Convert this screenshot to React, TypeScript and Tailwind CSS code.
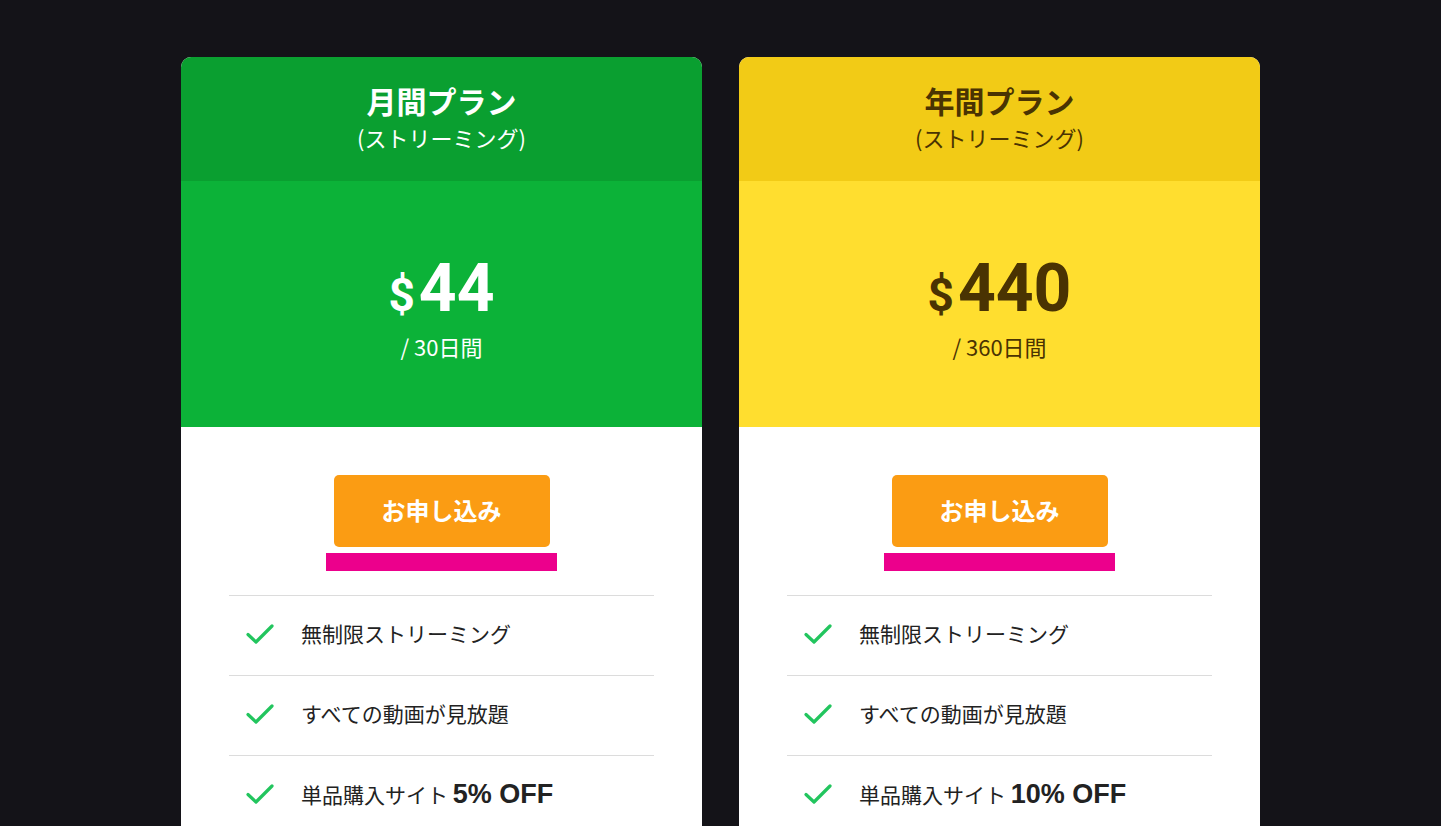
import React from "react";

const jp = '"Noto Sans CJK JP", "Noto Sans", sans-serif';
const num = 'Roboto, "Noto Sans", sans-serif';

function Check() {
  return (
    <svg width="28" height="22" viewBox="0 0 28 22" fill="none">
      <path d="M2 11.5 L10 19 L26 3" stroke="#22c55e" strokeWidth="3.2" strokeLinecap="round" strokeLinejoin="round" />
    </svg>
  );
}

type Plan = {
  title: string;
  price: string;
  period: string;
  off: string;
  headBg: string;
  priceBg: string;
  text: string;
};

function Card({ p }: { p: Plan }) {
  return (
    <div className="w-[521px] rounded-t-[10px] overflow-hidden bg-white" style={{ fontFamily: jp }}>
      <div className={`h-[124px] flex flex-col items-center pt-[23px] ${p.headBg} ${p.text}`}>
        <div className="text-[30px] font-bold leading-[40px]">{p.title}</div>
        <div className="text-[22px] leading-[30px] mt-[2px]">(ストリーミング)</div>
      </div>
      <div className={`h-[246px] flex flex-col items-center pt-[72px] ${p.priceBg} ${p.text}`}>
        <div className="flex items-baseline font-bold" style={{ fontFamily: num }}>
          <span className="text-[46px] mr-[4px]">$</span>
          <span className="text-[66px] leading-[72px]">{p.price}</span>
        </div>
        <div className="text-[22px] mt-[1px] leading-[30px]">{p.period}</div>
      </div>
      <div className="flex flex-col items-center pt-[48px]">
        <button className="w-[216px] h-[72px] rounded-[5px] bg-[#fb9c13] text-white text-[24px] font-bold pb-[2px]">
          お申し込み
        </button>
        <div className="w-[231px] h-[18px] bg-[#ec008c] mt-[6px]" />
      </div>
      <div className="mx-[48px] mt-[24px]">
        {[
          <span key="a">無制限ストリーミング</span>,
          <span key="b">すべての動画が見放題</span>,
          <span key="c">
            単品購入サイト <b className="text-[27px] font-bold" style={{ fontFamily: '"Liberation Sans", sans-serif' }}>{p.off}</b>
          </span>,
        ].map((t, i) => (
          <div key={i} className="h-[80px] border-t border-[#dcdcdc] flex items-center pl-[17px] pb-[3px] text-[21px] text-[#222]">
            <Check />
            <div className="ml-[27px]">{t}</div>
          </div>
        ))}
      </div>
    </div>
  );
}

export default function App() {
  const plans: Plan[] = [
    {
      title: "月間プラン",
      price: "44",
      period: "/ 30日間",
      off: "5% OFF",
      headBg: "bg-[#0a9f30]",
      priceBg: "bg-[#0cb238]",
      text: "text-white",
    },
    {
      title: "年間プラン",
      price: "440",
      period: "/ 360日間",
      off: "10% OFF",
      headBg: "bg-[#f2cb16]",
      priceBg: "bg-[#ffde2f]",
      text: "text-[#4a3302]",
    },
  ];
  return (
    <div className="w-full h-[826px] overflow-hidden bg-[#141318] flex justify-center gap-[37px] pt-[57px]">
      {plans.map((p) => (
        <Card key={p.title} p={p} />
      ))}
    </div>
  );
}
